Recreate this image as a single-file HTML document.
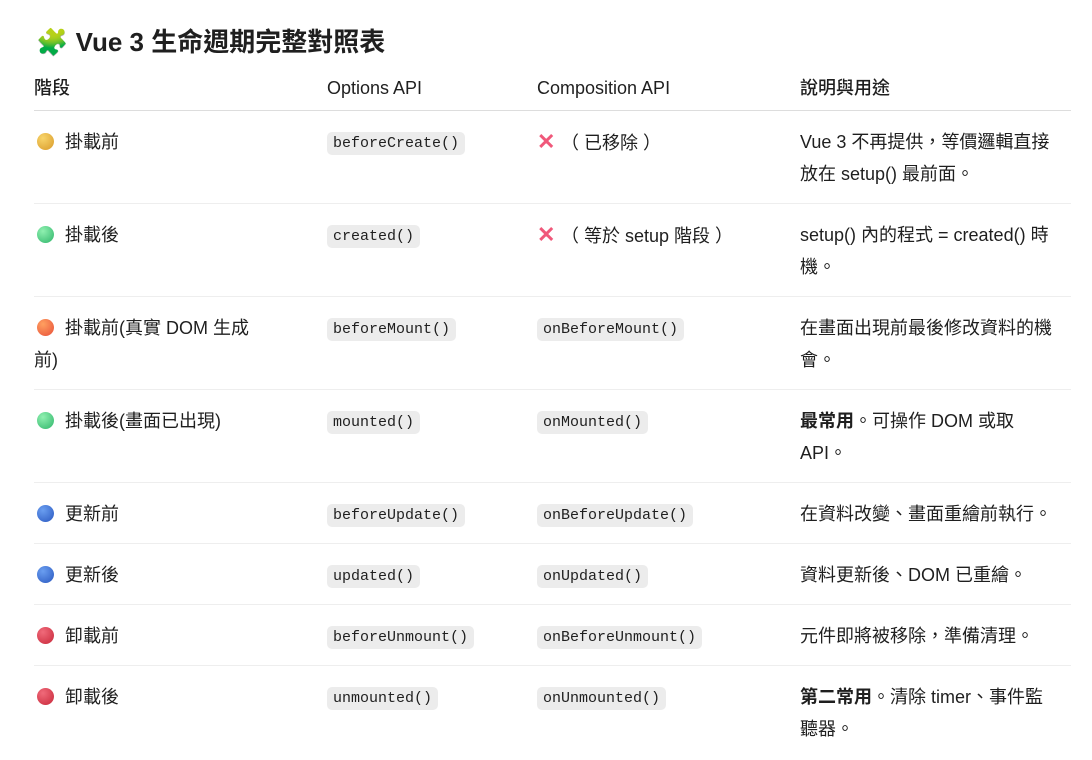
<!DOCTYPE html>
<html><head><meta charset="utf-8"><style>
body{margin:0;background:#fff;font-family:"Liberation Sans","Noto Sans CJK TC",sans-serif;color:#1f1f1f;}
h1{position:absolute;left:36px;top:23px;margin:0;font-size:26px;font-weight:bold;line-height:38px;}
table{position:absolute;left:34px;top:72px;border-collapse:collapse;table-layout:fixed;width:1037px;font-size:18px;}
th{text-align:left;font-weight:500;line-height:32px;padding:0 0 6px 0;border-bottom:1px solid #ddd;font-size:18px;}
td{vertical-align:top;line-height:32px;padding:15px 12px 13px 0;border-bottom:1px solid #eee;}
td:first-child{padding-right:70px}
tr:last-child td{border-bottom:none}
code{font-family:"Liberation Mono",monospace;font-size:15px;line-height:15px;background:#ececec;border-radius:5px;padding:4px 6px;display:inline-block;vertical-align:1px;}
.dot{display:inline-block;width:17px;height:17px;border-radius:50%;vertical-align:-2px;margin:0 11px 0 3px;}
.y{background:radial-gradient(circle at 35% 30%,#f8d46a,#d89a2a)}
.g{background:radial-gradient(circle at 35% 30%,#8ff0b0,#2fb56a)}
.o{background:radial-gradient(circle at 35% 30%,#ffa060,#e8503a)}
.b{background:radial-gradient(circle at 35% 30%,#6a9ef0,#2a58c0)}
.r{background:radial-gradient(circle at 35% 30%,#f06a7a,#c8283a)}
.x{color:#f0587a;font-weight:bold;font-size:22px;margin-right:2px;display:inline-block;width:22px}
</style></head><body>
<h1><span style="color:#7ad36a">🧩</span> Vue 3 生命週期完整對照表</h1>
<table>
<colgroup><col style="width:293px"><col style="width:210px"><col style="width:263px"><col style="width:271px"></colgroup>
<tr><th>階段</th><th>Options API</th><th>Composition API</th><th>說明與用途</th></tr>
<tr><td><span class="dot y"></span>掛載前</td><td><code>beforeCreate()</code></td><td><span class="x">✕</span>（ 已移除 ）</td><td>Vue 3 不再提供，等價邏輯直接放在 setup() 最前面。</td></tr>
<tr><td><span class="dot g"></span>掛載後</td><td><code>created()</code></td><td><span class="x">✕</span>（ 等於 setup 階段 ）</td><td>setup() 內的程式 = created() 時機。</td></tr>
<tr><td><span class="dot o"></span>掛載前(真實 DOM 生成前)</td><td><code>beforeMount()</code></td><td><code>onBeforeMount()</code></td><td>在畫面出現前最後修改資料的機會。</td></tr>
<tr><td><span class="dot g"></span>掛載後(畫面已出現)</td><td><code>mounted()</code></td><td><code>onMounted()</code></td><td><b>最常用</b>。可操作 DOM 或取 API。</td></tr>
<tr><td><span class="dot b"></span>更新前</td><td><code>beforeUpdate()</code></td><td><code>onBeforeUpdate()</code></td><td>在資料改變、畫面重繪前執行。</td></tr>
<tr><td><span class="dot b"></span>更新後</td><td><code>updated()</code></td><td><code>onUpdated()</code></td><td>資料更新後、DOM 已重繪。</td></tr>
<tr><td><span class="dot r"></span>卸載前</td><td><code>beforeUnmount()</code></td><td><code>onBeforeUnmount()</code></td><td>元件即將被移除，準備清理。</td></tr>
<tr><td><span class="dot r"></span>卸載後</td><td><code>unmounted()</code></td><td><code>onUnmounted()</code></td><td><b>第二常用</b>。清除 timer、事件監聽器。</td></tr>
</table>
</body></html>
